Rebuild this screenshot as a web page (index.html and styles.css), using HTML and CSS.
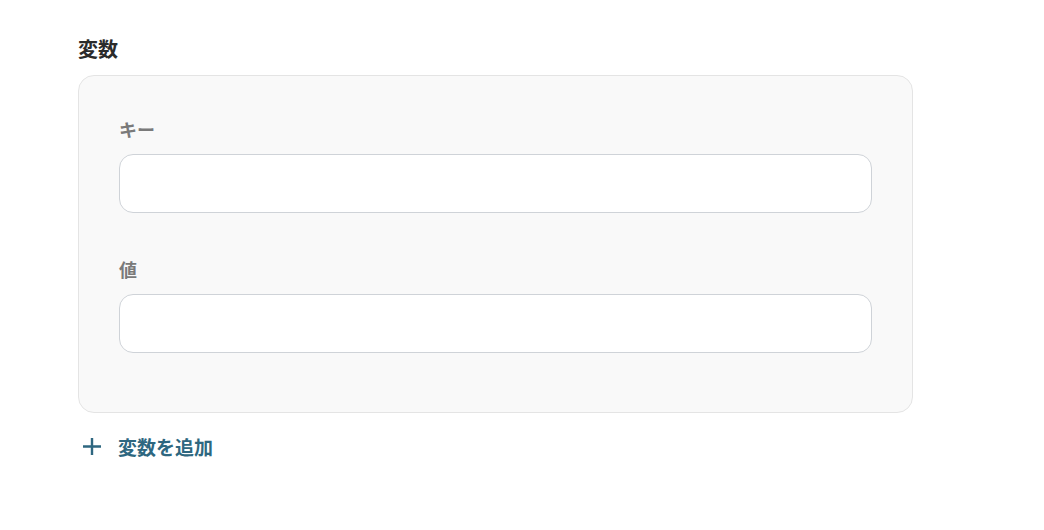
FILE: index.html
```html
<!DOCTYPE html>
<html lang="ja">
<head>
<meta charset="utf-8">
<link rel="stylesheet" href="styles.css">
</head>
<body>
<div class="section">
  <h2 class="title">変数</h2>
  <div class="panel">
    <div class="field">
      <label class="label">キー</label>
      <input class="input" type="text">
    </div>
    <div class="field">
      <label class="label">値</label>
      <input class="input" type="text">
    </div>
  </div>
  <button class="add">
    <svg width="18" height="18" viewBox="0 0 18 18"><path d="M9 0v17M0 8.5h18" stroke="currentColor" stroke-width="2.4" fill="none"/></svg>
    <span>変数を追加</span>
  </button>
</div>
</body>
</html>
```
FILE: styles.css
```css
* {
  margin: 0;
  padding: 0;
  box-sizing: border-box;
}
body {
  background: #fff;
  font-family: "Noto Sans CJK JP", "Noto Sans", sans-serif;
  color: #333;
}
.section {
  width: 835px;
  margin-left: 78px;
  padding-top: 36px;
}
.title {
  font-size: 20px;
  font-weight: 700;
  line-height: 26px;
  color: #2b2b2b;
  margin-bottom: 13px;
}
.panel {
  background: #f9f9f9;
  border: 1px solid #e4e4e4;
  border-radius: 16px;
  padding: 40px 40px 59px;
  display: flex;
  flex-direction: column;
  gap: 43px;
}
.field {
  display: flex;
  flex-direction: column;
}
.label {
  font-size: 18px;
  font-weight: 700;
  line-height: 26px;
  color: #7a7a7a;
  margin-bottom: 12px;
}
.input {
  height: 59px;
  border: 1px solid #cfd3d8;
  border-radius: 14px;
  background: #fff;
  outline: none;
}
.add {
  margin-top: 21px;
  display: flex;
  align-items: center;
  gap: 17px;
  background: none;
  border: none;
  color: #2e6780;
  font-family: inherit;
  font-size: 19px;
  font-weight: 700;
  line-height: 26px;
  padding-left: 5px;
  cursor: pointer;
}
.add svg {
  display: block;
}
```
